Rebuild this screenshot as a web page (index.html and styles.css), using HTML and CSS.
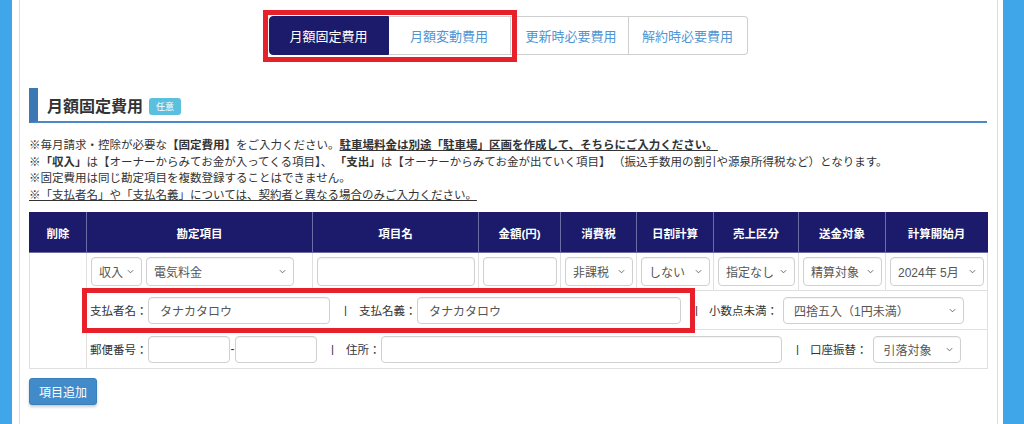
FILE: index.html
```html
<!DOCTYPE html>
<html lang="ja">
<head>
<meta charset="utf-8">
<title>月額固定費用</title>
<link rel="stylesheet" href="styles.css">
</head>
<body>
<div class="page">
  <div class="edge edge-left"></div>
  <main class="panel">
    <div class="tabs-row">
      <div class="tabs">
        <button class="tab t1 active">月額固定費用</button>
        <button class="tab t2">月額変動費用</button>
        <button class="tab t3">更新時必要費用</button>
        <button class="tab t4">解約時必要費用</button>
        <div class="mark mark-tabs"></div>
      </div>
    </div>

    <h2 class="sec-title">月額固定費用<span class="badge">任意</span></h2>

    <div class="notes">
      <p>※毎月請求・控除が必要な<b>【固定費用】</b>をご入力ください。<b class="u">駐車場料金は別途「駐車場」区画を作成して、そちらにご入力ください。</b></p>
      <p>※<b>「収入」</b>は【オーナーからみてお金が入ってくる項目】、 <b>「支出」</b>は【オーナーからみてお金が出ていく項目】 （振込手数用の割引や源泉所得税など）となります。</p>
      <p>※固定費用は同じ勘定項目を複数登録することはできません。</p>
      <p><span class="u">※「支払者名」や「支払名義」については、契約者と異なる場合のみご入力ください。</span></p>
    </div>

    <div class="table-wrap">
      <table class="grid">
        <colgroup>
          <col class="c1"><col class="c2"><col class="c3"><col class="c4"><col class="c5"><col class="c6"><col class="c7"><col class="c8"><col class="c9">
        </colgroup>
        <thead>
          <tr>
            <th>削除</th><th>勘定項目</th><th>項目名</th><th>金額(円)</th><th>消費税</th><th>日割計算</th><th>売上区分</th><th>送金対象</th><th>計算開始月</th>
          </tr>
        </thead>
        <tbody>
          <tr class="r1">
            <td rowspan="3" class="del"></td>
            <td>
              <div class="pair">
                <div class="sel w-kind"><span>収入</span><svg viewBox="0 0 8 5" class="chev"><polyline points="1,1 4,4 7,1"/></svg></div>
                <div class="sel w-item"><span>電気料金</span><svg viewBox="0 0 8 5" class="chev"><polyline points="1,1 4,4 7,1"/></svg></div>
              </div>
            </td>
            <td><div class="inp"></div></td>
            <td><div class="inp"></div></td>
            <td><div class="sel"><span>非課税</span><svg viewBox="0 0 8 5" class="chev"><polyline points="1,1 4,4 7,1"/></svg></div></td>
            <td><div class="sel"><span>しない</span><svg viewBox="0 0 8 5" class="chev"><polyline points="1,1 4,4 7,1"/></svg></div></td>
            <td><div class="sel"><span>指定なし</span><svg viewBox="0 0 8 5" class="chev"><polyline points="1,1 4,4 7,1"/></svg></div></td>
            <td><div class="sel"><span>精算対象</span><svg viewBox="0 0 8 5" class="chev"><polyline points="1,1 4,4 7,1"/></svg></div></td>
            <td><div class="sel"><span>2024年 5月</span><svg viewBox="0 0 8 5" class="chev"><polyline points="1,1 4,4 7,1"/></svg></div></td>
          </tr>
          <tr class="r2">
            <td colspan="8">
              <div class="line">
                <label class="lbl">支払者名：</label>
                <div class="inp txt w-payer">タナカタロウ</div>
                <span class="sep s1">|</span>
                <label class="lbl">支払名義：</label>
                <div class="inp txt w-name">タナカタロウ</div>
                <span class="sep s2">|</span>
                <label class="lbl lbl-auto">小数点未満：</label>
                <div class="sel w-round"><span>四捨五入（1円未満）</span><svg viewBox="0 0 8 5" class="chev"><polyline points="1,1 4,4 7,1"/></svg></div>
              </div>
            </td>
          </tr>
          <tr class="r3">
            <td colspan="8">
              <div class="line">
                <label class="lbl">郵便番号：</label>
                <div class="inp w-zip"></div>
                <span class="dash">-</span>
                <div class="inp w-zip"></div>
                <span class="sep s3">|</span>
                <label class="lbl lbl-addr">住所：</label>
                <div class="inp w-addr"></div>
                <span class="sep s4">|</span>
                <label class="lbl lbl-auto">口座振替：</label>
                <div class="sel w-bank"><span>引落対象</span><svg viewBox="0 0 8 5" class="chev"><polyline points="1,1 4,4 7,1"/></svg></div>
              </div>
            </td>
          </tr>
        </tbody>
      </table>
      <div class="mark mark-payer"></div>
    </div>

    <button class="add-btn">項目追加</button>
  </main>
  <div class="edge edge-right"></div>
</div>
</body>
</html>
```

FILE: styles.css
```css
* { box-sizing: border-box; }
html, body { margin: 0; padding: 0; background: #fff; }
body {
  font-family: "Liberation Sans", "Noto Sans CJK JP", sans-serif;
  color: #333;
}
.page {
  display: flex;
  width: 1024px;
  height: 424px;
  overflow: hidden;
}
.edge { flex: none; height: 100%; background: #3fa7e9; }
.edge-left { width: 12px; margin-right: 7px; }
.edge-right { width: 21px; margin-left: 5px; }

.panel {
  flex: none;
  width: 979px;
  height: 100%;
  border-left: 1px solid #dcdcdc;
  border-right: 1px solid #dcdcdc;
  padding: 16px 10px 0 9px;
}

/* tabs */
.tabs-row { display: flex; justify-content: center; }
.tabs { position: relative; display: flex; }
.tab {
  height: 39px;
  padding: 0;
  margin: 0;
  font-family: "Noto Sans CJK JP", sans-serif;
  font-size: 13px;
  color: #4f95d3;
  background: #fff;
  border: 1px solid #cfcfcf;
  border-left: none;
  border-radius: 0;
  text-align: center;
}
.t1 { width: 120px; border-left: 1px solid #1b1a6b; border-radius: 4px 0 0 4px; }
.t2 { width: 122px; }
.t3 { width: 118px; padding-left: 4px; }
.t4 { width: 119px; border-radius: 0 4px 4px 0; }
.tab.active { background: #1b1a6b; color: #fff; border-color: #1b1a6b; }

.mark { position: absolute; border: 5px solid #e8202a; pointer-events: none; }
.mark-tabs { left: -6px; top: -6px; width: 254px; height: 52px; }

/* section title */
.sec-title {
  display: flex;
  align-items: center;
  height: 35px;
  margin: 33px 0 0;
  padding-left: 9px;
  border-left: 9px solid #3c78b4;
  border-bottom: 2px solid #4a88c8;
  font-family: "Noto Sans CJK JP", sans-serif;
  font-size: 16px;
  font-weight: 700;
  color: #333;
}
.badge {
  display: inline-flex;
  align-items: center;
  justify-content: center;
  width: 32px;
  height: 17px;
  margin-left: 6px;
  margin-top: 4px;
  border-radius: 3px;
  background: #5bc0de;
  color: #fff;
  font-size: 9px;
  font-weight: 400;
}

/* notes */
.notes {
  margin-top: 13px;
  font-family: "Noto Sans CJK JP", sans-serif;
  font-size: 11.5px;
  line-height: 16.5px;
  color: #333;
}
.notes p { margin: 0; white-space: pre; }
.notes b { font-weight: 700; }
.u { text-decoration: underline; }

/* table */
.table-wrap { position: relative; margin-top: 10px; width: 958px; }
.grid {
  width: 958px;
  table-layout: fixed;
  border-collapse: collapse;
  font-family: "Liberation Sans", "Noto Sans CJK JP", sans-serif;
  font-size: 11.5px;
}
.c1 { width: 57px; } .c2 { width: 226px; } .c3 { width: 166px; }
.c4 { width: 82px; } .c5 { width: 76px; } .c6 { width: 77px; }
.c7 { width: 85px; } .c8 { width: 87px; } .c9 { width: 102px; }

.grid th {
  height: 40px;
  padding: 0;
  background: #1b1a6b;
  color: #fff;
  font-weight: 700;
  text-align: center;
  border: 1px solid #6d6da6;
  border-top-color: #1b1a6b;
}
.grid th:first-child { border-left-color: #1b1a6b; }
.grid th:last-child { border-right-color: #1b1a6b; }
.grid td {
  padding: 0 3px 0 4px;
  border: 1px solid #e0e0e0;
  vertical-align: middle;
}
.r1 td { height: 38px; }
.r2 td, .r3 td { height: 39px; padding-left: 3px; }

.sel, .inp {
  display: flex;
  align-items: center;
  width: 100%;
  height: 29px;
  border: 1px solid #d0d0d0;
  border-radius: 4px;
  background: #fff;
  color: #555;
  box-shadow: inset 0 1px 1px rgba(0,0,0,0.05);
  font-size: 12px;
  white-space: nowrap;
}
.sel { justify-content: space-between; padding: 0 7px 0 7px; }
.sel span { overflow: hidden; }
.chev { width: 7px; height: 5px; flex: none; fill: none; stroke: #666; stroke-width: 1.1; }

.pair { display: flex; gap: 4px; }
.w-kind { width: 51px; flex: none; }
.w-item { width: 148px; flex: none; }

.line { display: flex; align-items: center; }
.line .sel, .line .inp { height: 27px; flex: none; }
.lbl { width: 58px; flex: none; font-size: 11.5px; color: #333; white-space: nowrap; }
.lbl-auto { width: auto; }
.lbl-addr { width: 35px; }
.txt { padding-left: 11px; font-size: 12px; }
.w-payer { width: 182px; }
.w-name { width: 264px; }
.w-round { width: 181px; margin-left: 5px; padding-left: 10px; }
.w-zip { width: 82px; }
.w-addr { width: 401px; }
.w-bank { width: 88px; margin-left: 5px; padding-left: 10px; }
.dash { width: 5px; text-align: center; font-size: 12px; color: #333; }
.sep { flex: none; font-size: 11.5px; color: #333; }
.s1 { margin: 0 12px 0 14px; }
.s2 { margin: 0 11px 0 14px; }
.s3 { margin: 0 12px 0 14px; }
.s4 { margin: 0 11px 0 14px; }

.mark-payer { left: 53px; top: 76px; width: 613px; height: 45px; }

.add-btn {
  display: block;
  margin-top: 9px;
  width: 68px;
  height: 27px;
  padding: 0;
  border: 1px solid #3a7fbd;
  border-radius: 3px;
  background: #428bca;
  color: #fff;
  font-family: "Noto Sans CJK JP", sans-serif;
  font-size: 12px;
  box-shadow: 0 2px 3px rgba(0,0,0,0.2);
}
```
